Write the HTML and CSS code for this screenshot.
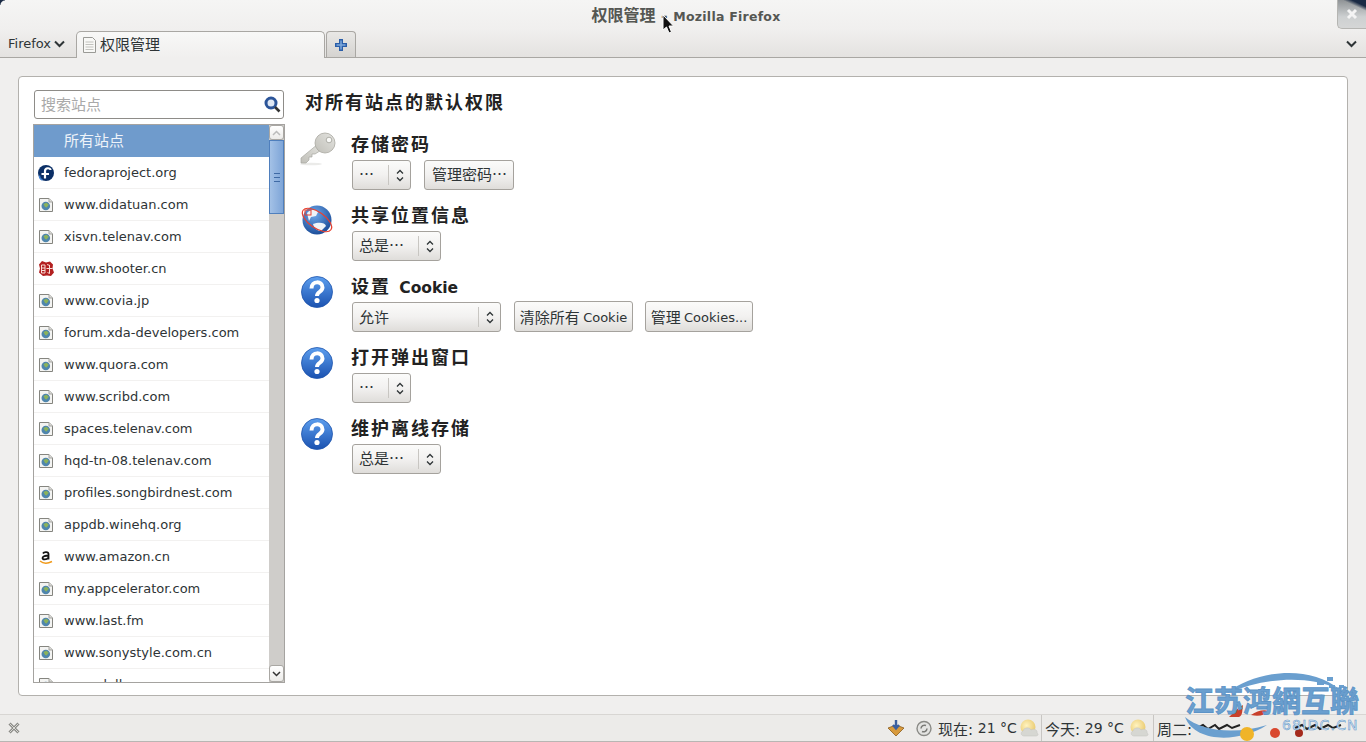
FILE: index.html
```html
<!DOCTYPE html>
<html lang="zh-CN">
<head>
<meta charset="utf-8">
<title>权限管理 - Mozilla Firefox</title>
<link rel="stylesheet" href="styles.css">
</head>
<body>
<svg class="defs" width="0" height="0" aria-hidden="true">
  <defs>
    <linearGradient id="qg" x1="0" y1="0" x2="0" y2="1"><stop offset="0" stop-color="#5c9eee"/><stop offset="1" stop-color="#1b52b0"/></linearGradient>
    <linearGradient id="keyg" x1="1" y1="0" x2="0" y2="1"><stop offset="0" stop-color="#e4e4e0"/><stop offset="1" stop-color="#c0bfb8"/></linearGradient>
    <radialGradient id="globeg" cx=".4" cy=".3" r=".8"><stop offset="0" stop-color="#6ea8ea"/><stop offset="1" stop-color="#12428f"/></radialGradient>
    <radialGradient id="sung" cx=".4" cy=".4" r=".7"><stop offset="0" stop-color="#fff3c0"/><stop offset="1" stop-color="#e8c768"/></radialGradient>
    <symbol id="i-page" viewBox="0 0 16 16">
      <path d="M1.500 1.500h9.500l3.500 3.500v9.500h-13z" fill="#f4f4f2" stroke="#85857f"/>
      <path d="M11 1.500v3.500h3.500" fill="#dcdcd8" stroke="#a5a5a1"/>
      <circle cx="7.800" cy="9" r="4.300" fill="#4f86ad"/>
      <path d="M5.500 7l3-1.200 2.300 2-2.300 2.800-1.400-.6z" fill="#8cb35a"/>
    </symbol>
    <symbol id="i-q" viewBox="0 0 36 36">
      <circle cx="17" cy="18" r="15.500" fill="url(#qg)" stroke="#1f56ad" stroke-width=".8"/>
      <path d="M11.500 14.500c0-8 11-8 11-1 0 4.500-5.500 4-5.500 8.500" fill="none" stroke="#fff" stroke-width="4"/>
      <circle cx="17" cy="26.500" r="2.600" fill="#fff"/>
    </symbol>
    <symbol id="i-sun" viewBox="0 0 20 20">
      <circle cx="9" cy="9" r="7.500" fill="url(#sung)"/>
      <path d="M5 18c-3 0-4-4-1-5 1-4 7-4 8-1 3-2 7 0 6 3 2 1 1 3-1 3z" fill="#d6d7d2" stroke="#c2c3bf" stroke-width=".5"/>
    </symbol>
  </defs>
</svg>

<header class="titlebar">
  <span class="corner-l"></span>
  <div class="title">权限管理 - <span class="lat-title">Mozilla Firefox</span></div>
  <div class="wm-close">
    <svg width="12" height="12" viewBox="0 0 12 12"><path d="M2 2l8 8M10 2l-8 8" stroke="#f4f4f4" stroke-width="3"/></svg>
  </div>
</header>

<nav class="tabbar">
  <div class="app-menu">Firefox<svg class="chev" width="11" height="8" viewBox="0 0 11 8"><path d="M1 1.500l4.500 4.500 4.500-4.500" fill="none" stroke="#2e3436" stroke-width="2"/></svg></div>
  <div class="tab">
    <svg class="tab-doc" width="16" height="16" viewBox="0 0 16 16"><path d="M1.500.5h9l3 3v12h-12z" fill="#f8f8f6" stroke="#9a9a96"/><path d="M3.500 5h8M3.500 7.500h8M3.500 10h8M3.500 12.500h8" stroke="#c2c2be"/></svg>
    <span>权限管理</span>
  </div>
  <div class="newtab">
    <svg width="14" height="14" viewBox="0 0 14 14"><path d="M7 1v12M1 7h12" stroke="#2b5ea8" stroke-width="4"/><path d="M7 2.500v9M2.500 7h9" stroke="#7fa9dc" stroke-width="1.500"/></svg>
  </div>
  <div class="tabbar-space"></div>
  <svg class="tabs-chev" width="11" height="8" viewBox="0 0 11 8"><path d="M1 1.500l4.500 4.500 4.500-4.500" fill="none" stroke="#2e3436" stroke-width="2"/></svg>
</nav>

<main class="content">
  <section class="panel">
    <aside class="sidebar">
      <div class="search">
        <span class="search-text">搜索站点</span>
        <svg width="17" height="17" viewBox="0 0 17 17"><circle cx="7" cy="7" r="5" fill="#dfe8f5" stroke="#2c5599" stroke-width="3"/><path d="M11 11l4.500 4.500" stroke="#333" stroke-width="2.600"/></svg>
      </div>
      <div class="list">
        <ul class="sites">
          <li class="site site-all"><span class="site-icon"></span>所有站点</li>
          <li class="site"><svg class="site-icon" viewBox="0 0 16 16"><circle cx="8" cy="8" r="8" fill="#0b2f66"/><path d="M7 13.500V6c0-3.500 5.500-3.500 5.500-1M3.500 9H11" fill="none" stroke="#fff" stroke-width="2.200"/><path d="M1.500 10.500c0 2 1 4 3 4.500" fill="none" stroke="#3f7fd0" stroke-width="1.500"/></svg>fedoraproject.org</li>
          <li class="site"><svg class="site-icon"><use href="#i-page"/></svg>www.didatuan.com</li>
          <li class="site"><svg class="site-icon"><use href="#i-page"/></svg>xisvn.telenav.com</li>
          <li class="site"><svg class="site-icon" viewBox="0 0 16 16"><path d="M4 0l4 1.500L12 .5l3 3-.5 4 1.500 4-3 3.500-4-.5-4 .5-4-3.500 1-4-1-4z" fill="#b32020"/><path d="M3.500 4h3.500v8H3.500zM3.500 7h3.500M3.500 9.500h3.500M9 3.500l3 1M8.500 7.500H14.500M11.500 4v8.500l-2-1" fill="none" stroke="#f8dcd6" stroke-width="1"/></svg>www.shooter.cn</li>
          <li class="site"><svg class="site-icon"><use href="#i-page"/></svg>www.covia.jp</li>
          <li class="site"><svg class="site-icon"><use href="#i-page"/></svg>forum.xda-developers.com</li>
          <li class="site"><svg class="site-icon"><use href="#i-page"/></svg>www.quora.com</li>
          <li class="site"><svg class="site-icon"><use href="#i-page"/></svg>www.scribd.com</li>
          <li class="site"><svg class="site-icon"><use href="#i-page"/></svg>spaces.telenav.com</li>
          <li class="site"><svg class="site-icon"><use href="#i-page"/></svg>hqd-tn-08.telenav.com</li>
          <li class="site"><svg class="site-icon"><use href="#i-page"/></svg>profiles.songbirdnest.com</li>
          <li class="site"><svg class="site-icon"><use href="#i-page"/></svg>appdb.winehq.org</li>
          <li class="site"><svg class="site-icon" viewBox="0 0 16 16"><path d="M5 4.500c1-2 5.500-2 5.500.5v5.500M10.500 6.500c-3 0-6 .5-6 2.500s4 2 6-.5" fill="none" stroke="#111" stroke-width="1.800"/><path d="M2 12c3 2.500 8 2.500 12 .5" fill="none" stroke="#f09a1a" stroke-width="1.500"/></svg>www.amazon.cn</li>
          <li class="site"><svg class="site-icon"><use href="#i-page"/></svg>my.appcelerator.com</li>
          <li class="site"><svg class="site-icon"><use href="#i-page"/></svg>www.last.fm</li>
          <li class="site"><svg class="site-icon"><use href="#i-page"/></svg>www.sonystyle.com.cn</li>
          <li class="site"><svg class="site-icon"><use href="#i-page"/></svg>www.dell.com</li>
        </ul>
        <div class="scrollbar">
          <div class="sb-btn sb-up"><svg width="9" height="6" viewBox="0 0 9 6"><path d="M1 5l3.500-3.500L8 5" fill="none" stroke="#bbb" stroke-width="1.500"/></svg></div>
          <div class="sb-thumb"><span class="grip"></span></div>
          <div class="sb-track"></div>
          <div class="sb-btn sb-down"><svg width="9" height="6" viewBox="0 0 9 6"><path d="M1 1l3.500 3.500L8 1" fill="none" stroke="#333" stroke-width="1.500"/></svg></div>
        </div>
      </div>
    </aside>

    <div class="perms">
      <h1 class="perms-title">对所有站点的默认权限</h1>

      <div class="perm">
        <svg class="perm-icon" viewBox="0 0 36 36">
          <ellipse cx="11" cy="32" rx="11" ry="1.300" fill="#ebebe9"/>
          <path d="M18 12L1 26v5h5l3-3v-3h3v-3h3l8-5z" fill="url(#keyg)" stroke="#a8a7a0" stroke-width=".7"/>
          <circle cx="25" cy="11" r="10" fill="url(#keyg)" stroke="#a8a7a0" stroke-width=".8"/>
          <circle cx="29" cy="8" r="2.800" fill="#fafaf8" stroke="#a0a098" stroke-width=".8"/>
        </svg>
        <div class="perm-body">
          <div class="perm-label">存储密码</div>
          <div class="controls">
            <div class="select sel-s"><span class="sel-text">…</span><span class="sel-arrows"><svg width="8" height="13" viewBox="0 0 8 13"><path d="M1 4.500l3-3 3 3M1 8.500l3 3 3-3" fill="none" stroke="#2e3436" stroke-width="1.300"/></svg></span></div>
            <div class="button button-pw"><span class="btn-text">管理密码…</span></div>
          </div>
        </div>
      </div>

      <div class="perm">
        <svg class="perm-icon" viewBox="0 0 36 36">
          <circle cx="17" cy="17" r="14.500" fill="url(#globeg)"/>
          <path d="M7 10c4-4 9-4 11-1l-2 4-5 1-2 4zM13 21c5-2 12-2 13 2l-5 5c-4 0-7-3-8-7z" fill="#eef3f8"/>
          <ellipse cx="17" cy="17" rx="17" ry="8" transform="rotate(35 17 17)" fill="none" stroke="#e8402f" stroke-width="1.200"/>
          <rect x="5" y="7" width="6" height="5" fill="none" stroke="#e8402f"/>
        </svg>
        <div class="perm-body">
          <div class="perm-label">共享位置信息</div>
          <div class="controls">
            <div class="select sel-m"><span class="sel-text">总是…</span><span class="sel-arrows"><svg width="8" height="13" viewBox="0 0 8 13"><path d="M1 4.500l3-3 3 3M1 8.500l3 3 3-3" fill="none" stroke="#2e3436" stroke-width="1.300"/></svg></span></div>
          </div>
        </div>
      </div>

      <div class="perm">
        <svg class="perm-icon"><use href="#i-q"/></svg>
        <div class="perm-body">
          <div class="perm-label">设置 <span class="lat-b">Cookie</span></div>
          <div class="controls">
            <div class="select sel-l"><span class="sel-text sel-text-low">允许</span><span class="sel-arrows"><svg width="8" height="13" viewBox="0 0 8 13"><path d="M1 4.500l3-3 3 3M1 8.500l3 3 3-3" fill="none" stroke="#2e3436" stroke-width="1.300"/></svg></span></div>
            <div class="button button-tall">清除所有 <span class="lat">Cookie</span></div>
            <div class="button button-tall button-near">管理 <span class="lat">Cookies...</span></div>
          </div>
        </div>
      </div>

      <div class="perm">
        <svg class="perm-icon"><use href="#i-q"/></svg>
        <div class="perm-body">
          <div class="perm-label">打开弹出窗口</div>
          <div class="controls">
            <div class="select sel-s"><span class="sel-text">…</span><span class="sel-arrows"><svg width="8" height="13" viewBox="0 0 8 13"><path d="M1 4.500l3-3 3 3M1 8.500l3 3 3-3" fill="none" stroke="#2e3436" stroke-width="1.300"/></svg></span></div>
          </div>
        </div>
      </div>

      <div class="perm">
        <svg class="perm-icon"><use href="#i-q"/></svg>
        <div class="perm-body">
          <div class="perm-label">维护离线存储</div>
          <div class="controls">
            <div class="select sel-m"><span class="sel-text">总是…</span><span class="sel-arrows"><svg width="8" height="13" viewBox="0 0 8 13"><path d="M1 4.500l3-3 3 3M1 8.500l3 3 3-3" fill="none" stroke="#2e3436" stroke-width="1.300"/></svg></span></div>
          </div>
        </div>
      </div>
    </div>
  </section>
</main>

<footer class="statusbar">
  <svg class="st-close" width="12" height="12" viewBox="0 0 12 12"><path d="M1.500 1.500l9 9M10.500 1.500l-9 9" stroke="#8b8b87" stroke-width="3"/><path d="M1.500 1.500l9 9M10.500 1.500l-9 9" stroke="#d8d8d4" stroke-width="1"/></svg>
  <div class="st-space"></div>
  <svg class="st-ico st-box" width="18" height="18" viewBox="0 0 18 18"><path d="M1 9l8-3 8 3-8 8z" fill="#d89a3c" stroke="#8a5c1c" stroke-width=".8"/><path d="M9 1v8M6 6l3 3.500L12 6" fill="none" stroke="#3a5fa0" stroke-width="2.400"/></svg>
  <svg class="st-ico st-ref" width="16" height="17" viewBox="0 0 16 17"><circle cx="8" cy="8.500" r="7" fill="#e4e4e2" stroke="#8a8a86" stroke-width="1.400"/><path d="M5 8.500a3.500 3.500 0 0 1 5-3M11 8.500a3.500 3.500 0 0 1-5 3" fill="none" stroke="#7a7a76" stroke-width="1.500"/></svg>
  <div class="st-item st-now">现在: <span class="lat-st">21 °C</span><svg class="st-w" width="20" height="20"><use href="#i-sun"/></svg></div>
  <div class="st-item st-today">今天: <span class="lat-st">29 °C</span><svg class="st-w st-w2" width="20" height="20"><use href="#i-sun"/></svg></div>
  <div class="st-item st-week">周二:</div>
</footer>

<div class="watermark" aria-label="江苏鸿網互聯 68IDC.CN">
  <svg class="wm-art" width="181" height="74" viewBox="0 0 181 74">
    <path d="M14 61l6-3 5 4 7-4 4 4 8-4 5 3 8-3M112 61l7-3 5 4 8-4 5 4 8-4 5 3 8-3" fill="none" stroke="#222" stroke-width="2"/>
    <path d="M44 26C74 2 128-2 156 22 124 8 84 10 44 26z" fill="#6a9fcf"/>
    <path d="M134 14h7v4h-7zM144 10h6v4h-6zM146 18h6v3h-6zM156 18h5v3h-5z" fill="#6a9fcf"/>
    <path d="M2 50c16 14 50 18 82 8-28 18-72 18-82-8z" fill="#6a9fcf"/>
    <path d="M46 50c5-5 10-10 14-12-1 6 0 10-4 12zM68 48c6-4 12-6 18-4-4 4-10 6-18 4z" fill="#c8402c"/>
    <circle cx="64" cy="67" r="7" fill="#f0b428"/>
    <circle cx="92" cy="66" r="5" fill="#d9482f"/>
    <circle cx="116" cy="66" r="4" fill="#a52a1c"/>
  </svg>
  <div class="wm-name">江苏鸿網互聯</div>
  <div class="wm-url">68IDC.CN</div>
</div>

<svg class="cursor" width="13" height="20" viewBox="0 0 13 20"><path d="M1 1v15l3.500-3 2.500 6 2.500-1-2.500-6h4.500z" fill="#111" stroke="#fff" stroke-width="1"/></svg>
</body>
</html>
```
FILE: styles.css
```css
* { box-sizing: border-box; }
html, body { margin: 0; padding: 0; }
body {
  width: 1366px;
  height: 742px;
  overflow: hidden;
  display: flex;
  flex-direction: column;
  position: relative;
  background: #f0efee;
  color: #2e3436;
  font-family: "DejaVu Sans", "Noto Sans CJK SC", sans-serif;
  font-size: 15px;
}
.defs { position: absolute; }
.lat { font-family: "DejaVu Sans", sans-serif; font-size: 13px; position: relative; top: 1px; }
.lat-st { font-size: 14px; }

.titlebar {
  height: 30px;
  flex: none;
  position: relative;
  display: flex;
  align-items: center;
  justify-content: center;
  background: linear-gradient(#f5f5f4, #f0efee);
}
.corner-l {
  position: absolute;
  left: 0;
  top: 0;
  width: 5px;
  height: 5px;
  background: radial-gradient(circle at 100% 100%, transparent 4px, #1a2a44 5px);
}
.title {
  margin: 3px 0 0 6px;
  color: #555753;
  font-size: 16px;
  font-weight: 700;
  white-space: pre;
  line-height: 26px;
}
.lat-title { font-size: 12.500px; letter-spacing: .02em; }
.wm-close {
  position: absolute;
  right: 0;
  top: 0;
  width: 29px;
  height: 29px;
  display: flex;
  align-items: center;
  justify-content: center;
  background:
    linear-gradient(205deg, #1a2a44 0, #1a2a44 6px, transparent 10px),
    linear-gradient(#8f9396, #cdd0d1 60%, #d5d6d6);
  border: 1px solid #b5b5b2;
  border-width: 0 0 1px 1px;
  border-bottom-left-radius: 5px;
}

.tabbar {
  height: 28px;
  flex: none;
  display: flex;
  align-items: flex-end;
  padding-left: 8px;
  border-bottom: 1px solid #a9a7a3;
  background: linear-gradient(#f0efee, #e4e2e0);
}
.app-menu {
  display: flex;
  align-items: center;
  gap: 3px;
  width: 68px;
  height: 27px;
  font-size: 13px;
  color: #2e3436;
}
.tab {
  width: 249px;
  height: 27px;
  margin-bottom: -1px;
  padding-left: 5px;
  display: flex;
  align-items: center;
  gap: 2px;
  background: linear-gradient(#f8f8f7, #f0efee);
  border: 1px solid #a9a7a3;
  border-bottom: 0;
  border-radius: 5px 5px 0 0;
}
.tab span { position: relative; top: -2px; }
.newtab {
  width: 30px;
  height: 26px;
  margin-left: 1px;
  display: flex;
  align-items: center;
  justify-content: center;
  background: linear-gradient(#e9e8e6, #d5d3d0);
  border: 1px solid #a9a7a3;
  border-bottom: 0;
  border-radius: 4px 4px 0 0;
}
.tabbar-space { flex: 1; }
.tabs-chev { margin: 0 9px 9px 0; }

.content {
  flex: 1;
  min-height: 0;
  padding: 18px;
  background: #f0efee;
}
.panel {
  height: 100%;
  display: flex;
  padding: 13px 0 12px 14px;
  background: #fff;
  border: 1px solid #b3b1ad;
  border-radius: 4px;
}
.sidebar {
  width: 252px;
  flex: none;
  display: flex;
  flex-direction: column;
  gap: 5px;
}
.search {
  height: 29px;
  flex: none;
  margin: 0 1px;
  padding: 0 2px 0 6px;
  display: flex;
  align-items: center;
  justify-content: space-between;
  background: #fff;
  border: 1px solid #8e8c88;
  border-radius: 3px;
}
.search-text { color: #a9a9a9; position: relative; top: -1px; }
.list {
  flex: 1;
  min-height: 0;
  display: flex;
  overflow: hidden;
  border: 1px solid #a5a3a0;
}
.sites {
  flex: 1;
  min-width: 0;
  list-style: none;
  margin: 0;
  padding: 0;
  overflow: hidden;
}
.site {
  height: 32px;
  display: flex;
  align-items: center;
  gap: 10px;
  padding-left: 4px;
  font-size: 13px;
  color: #2e3436;
  border-bottom: 1px solid #f2f1f0;
}
.site-icon { width: 16px; height: 16px; flex: none; display: block; }
.site-all {
  background: #6f9bcc;
  color: #eef3f9;
  font-size: 15px;
  border-bottom: 0;
  padding-bottom: 4px;
}
.scrollbar {
  width: 15px;
  flex: none;
  display: flex;
  flex-direction: column;
  background: #cfcdca;
}
.sb-btn {
  height: 15px;
  flex: none;
  display: flex;
  align-items: center;
  justify-content: center;
  background: linear-gradient(#fff, #ecebe9);
  border: 1px solid #a9a7a3;
  border-radius: 3px;
}
.sb-down { height: 17px; }
.sb-thumb {
  height: 74px;
  flex: none;
  display: flex;
  align-items: center;
  justify-content: center;
  background: linear-gradient(90deg, #a3c1e6, #7ea5d8);
  border: 1px solid #4f7fbd;
}
.grip {
  width: 6px;
  height: 9px;
  border-top: 1px solid #3f6aa5;
  border-bottom: 1px solid #3f6aa5;
  background: linear-gradient(transparent 3px, #3f6aa5 3px, #3f6aa5 4px, transparent 4px);
}
.sb-track { flex: 1; }

.perms {
  flex: 1;
  margin-left: 15px;
  display: flex;
  flex-direction: column;
  gap: 13px;
}
.perms-title {
  height: 26px;
  margin: 0 0 3px 5px;
  font-size: 18px;
  line-height: 26px;
  font-weight: 700;
  letter-spacing: 2px;
  color: #222;
}
.perm { display: flex; gap: 15px; }
.perm-icon { width: 36px; height: 36px; flex: none; display: block; }
.perm-body { display: flex; flex-direction: column; gap: 1px; }
.perm-label {
  height: 26px;
  font-size: 18px;
  line-height: 26px;
  font-weight: 700;
  letter-spacing: 2px;
  color: #222;
  white-space: pre;
}
.lat-b { font-size: 15.500px; letter-spacing: 0; }
.controls {
  display: flex;
  align-items: flex-end;
  gap: 13px;
  margin-left: 1px;
  height: 31px;
  font-family: "Noto Sans CJK SC", sans-serif;
}
.select, .button {
  height: 30px;
  display: flex;
  align-items: center;
  background: linear-gradient(#fbfbfa, #f2f1f0 50%, #dfddda);
  border: 1px solid #a5a29d;
  border-radius: 3px;
  color: #2e3436;
  white-space: pre;
}
.sel-s { width: 59px; }
.sel-m { width: 89px; }
.sel-l { width: 149px; }
.sel-text { flex: 1; padding-left: 6px; position: relative; top: -2px; }
.sel-text-low { top: -1px; }
.sel-arrows {
  width: 22px;
  height: 20px;
  flex: none;
  display: flex;
  align-items: center;
  justify-content: center;
  border-left: 1px solid #c8c6c2;
}
.button-pw { width: 90px; padding-left: 7px; }
.btn-text { position: relative; top: -2px; }
.button-tall { height: 31px; width: 119px; padding: 0 4px; justify-content: center; }
.button-near { width: 108px; margin-left: -1px; }

.statusbar {
  height: 28px;
  flex: none;
  display: flex;
  align-items: center;
  padding-left: 8px;
  background: #ecebe9;
  border-top: 1px solid #d8d6d3;
  border-bottom: 1px solid #b8b6b3;
  font-size: 15px;
  white-space: pre;
}
.st-space { flex: 1; }
.st-ico { margin-right: 11px; flex: none; }
.st-ref { margin-right: 6px; }
.st-item { height: 26px; display: flex; align-items: center; white-space: pre; }
.st-w { margin-left: 2px; }
.st-w2 { margin-left: 5px; }
.st-now { width: 104px; border-right: 1px solid #c8c6c3; }
.st-today { width: 112px; padding-left: 3px; border-right: 1px solid #c8c6c3; }
.st-week { width: 212px; padding-left: 3px; }

.watermark {
  position: absolute;
  left: 1183px;
  top: 667px;
  width: 181px;
  height: 74px;
}
.wm-art { position: absolute; left: 0; top: 0; }
.wm-name {
  position: absolute;
  left: 2px;
  top: 21px;
  font-size: 29px;
  line-height: 29px;
  font-weight: 700;
  color: #6a9fcf;
  -webkit-text-stroke: .8px #5c93c6;
  white-space: nowrap;
}
.wm-url {
  position: absolute;
  left: 99px;
  top: 51px;
  font-size: 14px;
  line-height: 14px;
  letter-spacing: 1.200px;
  color: #d8e8f6;
  -webkit-text-stroke: .5px #5c93c6;
  white-space: nowrap;
}
.cursor { position: absolute; left: 662px; top: 14px; }
```
